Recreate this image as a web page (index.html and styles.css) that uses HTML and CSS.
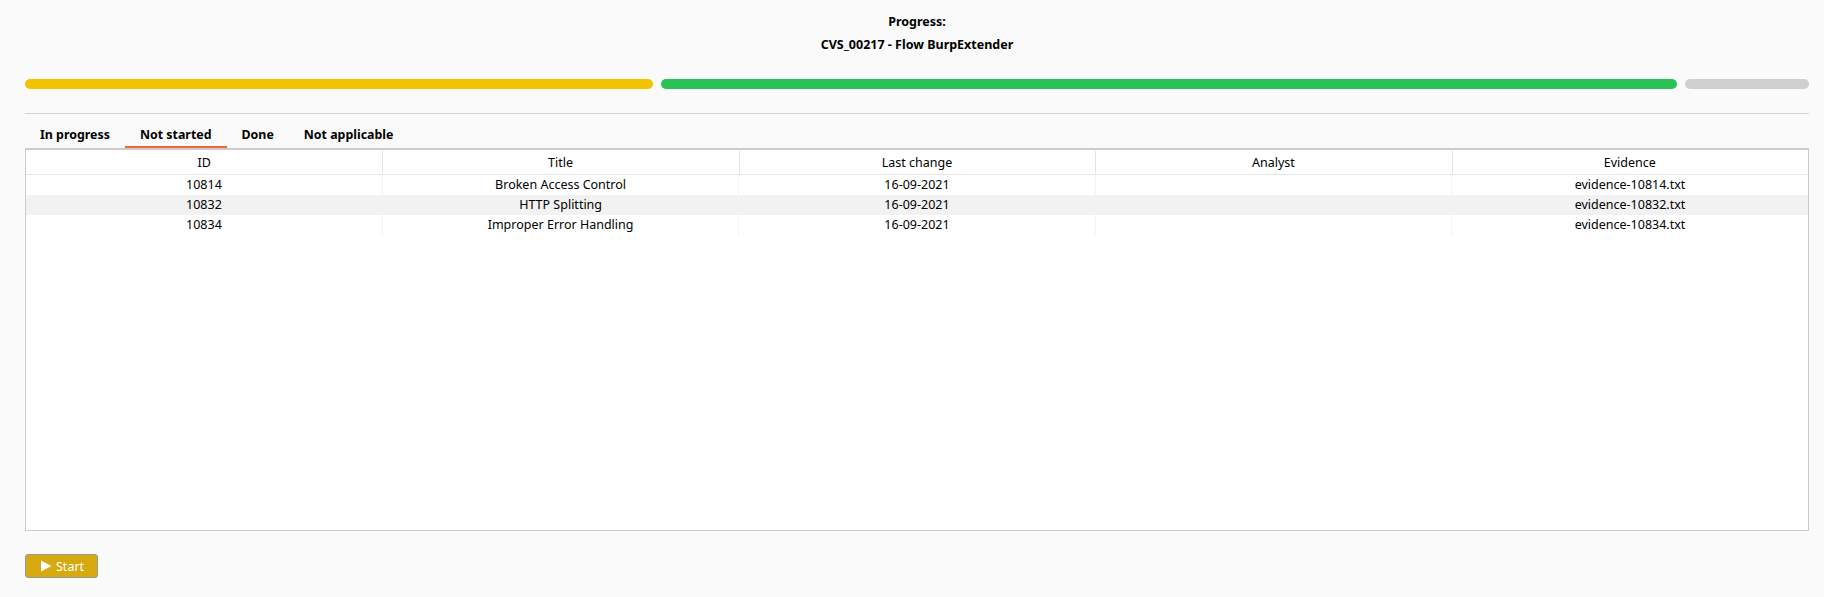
FILE: index.html
```html
<!DOCTYPE html>
<html>
<head>
<meta charset="utf-8">
<link rel="stylesheet" href="styles.css">
</head>
<body>
<div class="page">
  <div class="heading">
    <div class="heading-line">Progress:</div>
    <div class="heading-line">CVS_00217 - Flow BurpExtender</div>
  </div>
  <div class="bars">
    <div class="bar bar-progress"></div>
    <div class="bar bar-done"></div>
    <div class="bar bar-rest"></div>
  </div>
  <div class="divider"></div>
  <div class="tabs">
    <div class="tab">In progress</div>
    <div class="tab tab-active">Not started</div>
    <div class="tab">Done</div>
    <div class="tab">Not applicable</div>
  </div>
  <div class="table-box">
    <table class="grid">
      <thead>
        <tr><th>ID</th><th>Title</th><th>Last change</th><th>Analyst</th><th>Evidence</th></tr>
      </thead>
      <tbody>
        <tr><td>10814</td><td>Broken Access Control</td><td>16-09-2021</td><td></td><td>evidence-10814.txt</td></tr>
        <tr class="alt"><td>10832</td><td>HTTP Splitting</td><td>16-09-2021</td><td></td><td>evidence-10832.txt</td></tr>
        <tr><td>10834</td><td>Improper Error Handling</td><td>16-09-2021</td><td></td><td>evidence-10834.txt</td></tr>
      </tbody>
    </table>
  </div>
  <div class="actions">
    <button class="start-btn"><svg class="play" width="12" height="12" viewBox="0 0 12 12"><path d="M1 0.5 L11.5 6 L1 11.5 Z" fill="#ffffff"/></svg><span>Start</span></button>
  </div>
</div>
</body>
</html>
```

FILE: styles.css
```css
html, body {
  margin: 0;
  padding: 0;
  background: #fafafa;
}
body {
  font-family: "Noto Sans", "Open Sans", sans-serif;
  color: #000;
}
.page {
  padding: 0 15px 0 25px;
}
.heading {
  padding-top: 10px;
  display: flex;
  flex-direction: column;
  align-items: center;
}
.heading-line {
  font-size: 12.5px;
  font-weight: 700;
  line-height: 23px;
}
.bars {
  display: flex;
  gap: 8px;
  margin-top: 23px;
}
.bar {
  height: 10px;
  border-radius: 5px;
}
.bar-progress { width: 628px; background: #f2c300; }
.bar-done { width: 1016px; background: #2cc157; }
.bar-rest { flex: 1; background: #cfcfcf; }
.divider {
  height: 1px;
  background: #d4d4d4;
  margin-top: 24px;
}
.tabs {
  display: flex;
}
.tab {
  padding: 12px 15px 2px;
  line-height: 18px;
  font-size: 12.4px;
  font-weight: 700;
  border-bottom: 2px solid transparent;
}
.tab-active {
  border-bottom-color: #f2643c;
}
.table-box {
  border: 1px solid #cccccc;
  border-top: 2px solid #cccccc;
  background: #ffffff;
  height: 380px;
}
.grid {
  width: 100%;
  border-collapse: collapse;
  table-layout: fixed;
  font-size: 12.5px;
}
.grid th {
  font-weight: 400;
  height: 24px;
  padding: 0;
  border-bottom: 1px solid #e6e6e6;
}
.grid th + th {
  background-image: linear-gradient(#e3e3e3, #e3e3e3);
  background-size: 1px 22px;
  background-position: 0 1px;
  background-repeat: no-repeat;
}
.grid td {
  height: 20px;
  padding: 0;
  text-align: center;
  line-height: 20px;
}
.grid td + td {
  border-left: 1px solid #f3f3f3;
}
.grid tr.alt td {
  background: #f2f2f2;
}
.actions {
  margin-top: 23px;
}
.start-btn {
  display: flex;
  align-items: center;
  gap: 4px;
  width: 73px;
  height: 24px;
  padding: 0 0 0 14px;
  background: #d6a90f;
  border: 1px solid #9a9a9a;
  border-radius: 3px;
  color: #ffffff;
  font-family: "Noto Sans", "Open Sans", sans-serif;
  font-size: 12.5px;
  box-sizing: border-box;
}
.play {
  display: block;
}
```
